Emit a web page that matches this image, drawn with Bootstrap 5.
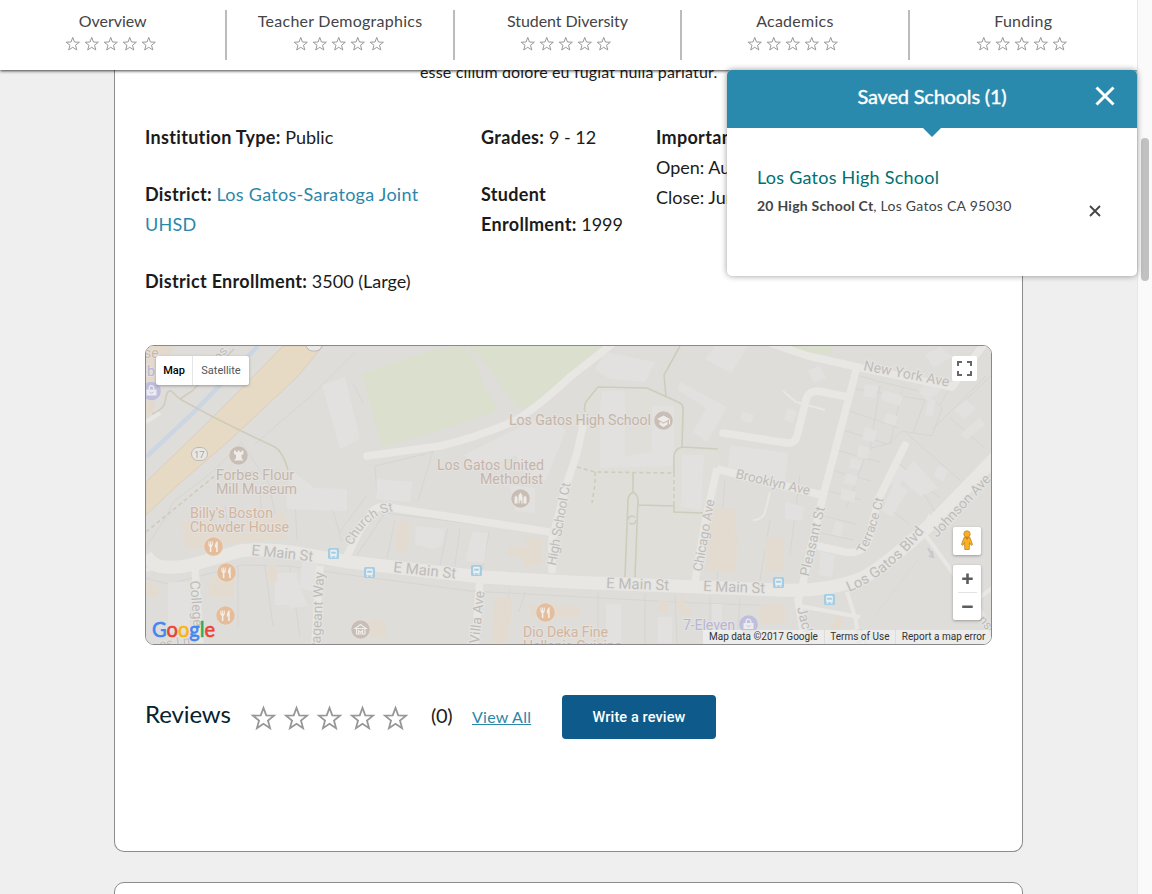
<!DOCTYPE html>
<html lang="en">
<head>
<meta charset="utf-8">
<meta name="viewport" content="width=device-width, initial-scale=1">
<title>Los Gatos High School</title>
<link rel="stylesheet" href="https://cdn.jsdelivr.net/npm/bootstrap@5.3.0/dist/css/bootstrap.min.css">
<style>
  body { font-family: Lato, "Liberation Sans", sans-serif; font-size: 18px; line-height: 30px; color: #1b1b1b; height: 894px; overflow: hidden; background: #efefef; }
  .page-area { width: 1137px; height: 894px; background: #efefef; overflow: hidden; }
  .section-bar { height: 70px; padding-top: 10px; background: #fff; box-shadow: 0 1px 3px rgba(0,0,0,.75); z-index: 2; flex: none; }
  .section-tab { height: 50px; width: 227.4px; flex: none; border-right: 2px solid #bcbcbc; color: #444; font-size: 16px; line-height: 22px; letter-spacing: .25px; }
  .section-tab.tab-tight { letter-spacing: -.05px; }
  .section-tab:last-child { border-right: 0; }
  .section-tab svg { display: block; margin: 4px 0 0 -4px; }
  .star-shape { fill: none; stroke: #969696; }
  .profile-card { width: 909px; margin-left: 114px; border: 1px solid #8c8c8c; background: #fff; }
  .profile-main { height: 782px; border-top: 0; border-radius: 0 0 10px 10px; padding: 0 30px; flex: none; }
  .profile-next { height: 60px; margin-top: 30px; border-radius: 10px 10px 0 0; flex: none; }
  .blurb { font-size: 16px; margin: -13px 0 35px 275px; letter-spacing: .16px; }
  .facts { height: 223px; }
  .facts p { margin-bottom: 27px; }
  .facts b { font-weight: 700; letter-spacing: .32px; }
  .facts .link-teal { letter-spacing: .28px; }
  .fact-a { width: 336px; padding-right: 50px; }
  .fact-b { width: 175px; padding-right: 20px; }
  .link-teal { color: #2b87a9; }
  .map-box { width: 847px; height: 300px; border: 1px solid #8a888a; border-radius: 9px; overflow: hidden; font-family: Roboto, sans-serif; }
  .map-box > svg { display: block; }
  .map-ctl { position: absolute; background: #fff; border-radius: 2px; box-shadow: 0 1px 3px rgba(0,0,0,.3); }
  .map-type { left: 10px; top: 10px; width: 93px; height: 29px; font-size: 11px; line-height: 29px; color: #555; }
  .map-type span:first-child { width: 37px; border-right: 1px solid #e6e6e6; color: #000; font-weight: 500; }
  .map-full { left: 806px; top: 10px; width: 25px; height: 25px; box-shadow: none; }
  .map-peg { left: 807px; top: 181px; width: 28px; height: 28px; }
  .map-zoom { left: 807px; top: 219px; width: 28px; height: 55px; }
  .map-legal { position: absolute; right: 0; bottom: 0; height: 14px; font-size: 10px; line-height: 14px; color: #333; }
  .map-legal span { background: rgba(240,240,239,.75); padding: 0 5.7px; margin-left: 1px; white-space: nowrap; }
  .reviews { margin-top: 50px; height: 44px; }
  .reviews h2 { font-size: 24px; font-weight: 400; color: #06222f; width: 106px; line-height: 38px; margin: 0; letter-spacing: -.1px; }
  .review-count { font-size: 20px; line-height: 41px; width: 41px; margin-left: 21px; letter-spacing: -.3px; }
  .view-all { font-size: 16px; line-height: 43px; letter-spacing: .25px; }
  .btn-review { width: 154px; height: 44px; margin-right: 276px; background: #0d5a8b; color: #fff; font: 500 14.5px Roboto, sans-serif; letter-spacing: .12px; border: 0; border-radius: 4px; }
  .saved { position: absolute; left: 727px; top: 70px; width: 410px; height: 206px; background: #fff; border-radius: 5px; box-shadow: 0 0 6px rgba(0,0,0,.4); z-index: 3; }
  .saved-head { height: 58px; background: #2a8aad; color: #fff; border-radius: 5px 5px 0 0; font-size: 20px; line-height: 52px; letter-spacing: -.2px; -webkit-text-stroke: .4px #fff; }
  .saved-head::after { content: ""; position: absolute; left: 195px; top: 57px; border: 10px solid transparent; border-top-color: #2a8aad; border-bottom: 0; }
  .saved-close { position: absolute; right: 22px; top: 16px; }
  .saved-item { padding: 33px 36px 0 30px; }
  .saved-name { font-size: 18px; line-height: 32px; color: #007070; letter-spacing: .24px; }
  .saved-addr { font-size: 14px; line-height: 25px; color: #444; letter-spacing: .25px; }
  .saved-remove { margin-top: 44px; }
  .scroll-track { width: 15px; height: 894px; background: #fafafa; border-left: 1px solid #e7e7e7; padding: 138px 0 0 3px; }
  .scroll-thumb { width: 8px; height: 143px; border-radius: 4px; background: #c1c1c1; }
</style>
</head>
<body>
<svg width="0" height="0" class="position-absolute">
  <symbol id="star" viewBox="0 0 24 24" overflow="visible"><path class="star-shape" d="M12 1.8l2.65 7.1 7.55.3-5.9 4.75 2 7.3L12 17.1l-6.3 4.15 2-7.3L1.8 9.2l7.55-.3z"/></symbol>
  <symbol id="stars-sm" viewBox="0 0 91 16"><g stroke-width="1.5"><use href="#star" x="0" width="15.500" height="16"/><use href="#star" x="19" width="15.500" height="16"/><use href="#star" x="38" width="15.500" height="16"/><use href="#star" x="57" width="15.500" height="16"/><use href="#star" x="76" width="15.500" height="16"/></g></symbol>
</svg>
<div class="d-flex position-relative">
  <main class="page-area d-flex flex-column">
    <nav class="section-bar d-flex position-relative">
      <div class="section-tab tab-tight d-flex flex-column align-items-center">Overview<svg width="91" height="16"><use href="#stars-sm"/></svg></div>
      <div class="section-tab d-flex flex-column align-items-center">Teacher Demographics<svg width="91" height="16"><use href="#stars-sm"/></svg></div>
      <div class="section-tab tab-tight d-flex flex-column align-items-center">Student Diversity<svg width="91" height="16"><use href="#stars-sm"/></svg></div>
      <div class="section-tab d-flex flex-column align-items-center">Academics<svg width="91" height="16"><use href="#stars-sm"/></svg></div>
      <div class="section-tab d-flex flex-column align-items-center">Funding<svg width="91" height="16"><use href="#stars-sm"/></svg></div>
    </nav>

    <section class="profile-card profile-main">
      <p class="blurb">esse cillum dolore eu fugiat nulla pariatur.</p>
      <div class="facts d-flex">
        <div class="fact-a">
          <p><b>Institution Type:</b> Public</p>
          <p><b>District:</b> <span class="link-teal">Los Gatos-Saratoga Joint UHSD</span></p>
          <p><b>District Enrollment:</b> 3500 (Large)</p>
        </div>
        <div class="fact-b">
          <p><b>Grades:</b> 9 - 12</p>
          <p><b>Student Enrollment:</b> 1999</p>
        </div>
        <div class="text-nowrap"><b>Important Dates:</b><br>Open: August 14<br>Close: June 8</div>
      </div>

      <div class="map-box position-relative">
        <svg width="845" height="298" viewBox="146 346 845 298">
          <defs>
            <g id="food"><circle r="10" fill="#e9dfd5"/><circle r="9.3" fill="#e4bd9c"/><path d="M-4.600-5v3.500M-2.900-5v4M-1.200-5v3.500" stroke="#f4eee7" stroke-width="1"/><path d="M-5-2h4.200q0 2.300-1.300 2.500V5.500h-1.600V.5Q-5 .3-5-2zM4.200 5.500V-5.500Q1.300-4.500 1.300 1h1.300v4.500z" fill="#f4eee7"/></g>
            <g id="bus"><rect x="-5.500" y="-5.500" width="11" height="11" rx="1.500" fill="#a4cde3"/><rect x="-3.300" y="-3.800" width="6.600" height="6.600" rx="1" fill="#eaf0f2"/><path d="M-2.300-1.800h4.600v2h-4.600z" fill="#a4cde3"/><path d="M-3 3h1.800v1.200H-3zM1.200 3H3v1.200H1.200z" fill="#eaf0f2"/></g>
            <g id="bag"><circle r="10" fill="#dcdbe2"/><circle r="9.3" fill="#bfbfdb"/><path d="M-5-1.500H5v6H-5z" fill="#ebebf0"/><path d="M-2.300-1.500v-1.500a2.300 2.300 0 0 1 4.600 0v1.500" fill="none" stroke="#ebebf0" stroke-width="1.300"/><path d="M-2 1q2 2.600 4 0" fill="none" stroke="#bfbfdb"/></g>
            <g id="spot"><circle r="10" fill="#e6e0db"/><circle r="9.3" fill="#c9beb6"/></g>
          </defs>
          <rect x="146" y="346" width="845" height="298" fill="#deddda"/>
          <path d="M584 405l14-18 49 2 36 18v45l35-3 4 19-20 110-152-3 25-120z" fill="#dfded8"/>
          <!-- parks -->
          <path d="M362 373l71-23 30-4 15 19 5 20 14 22-4 6-111 35zM468 346h140l-38 28-40 34h-13l-30-42zM790 346h42v8l-22-1z" fill="#dbdfce"/>
          <!-- parcel boundaries -->
          <g fill="none" stroke="#d4d3d0" stroke-width=".8">
            <path d="M146 547l22-33 5-12 43-33 25-27 28 42 10 50M355 352l-42 42-58 50M353 383l10 20M375 466l50-12 8-3-15 50M375 466l2 30M357 555l28-42 162 20M367 495l-28 38M395 520l-8 38M448 528l-9 42M460 528l-6 44M489 532l-7 40M146 578l22 6 20-5 55-14 45 1 62 9 120 16 75 4 150 8 90 3M510 590l-15 53M525 592l-6 20M598 592v50M645 594v50M675 594l2 50M710 597v45M740 599l-2 30M238 567v60M265 566l8 60M290 567l10 70M225 505l5 38M260 495l4 45M295 500l2 40M330 500l12 42"/>
            <path d="M857 375l20 6 50 12 15 15-10 28-30-5-12 12-22 6-22 60M850 388l75 12M847 410l52 18M843 430l44 14M836 450l44 12M831 470l40 11M825 490l36 10M880 385l-10 65M902 390l-12 55M925 400l-12 33M932 430l55-55M905 432l55 48M820 515l36 9M816 532l38 8M895 460l45 38M880 500l30 25M910 470l27 45M725 480l-8 100M770 520l-10 60M800 475l-10 80M940 405l28-50M950 418l35 30M955 410l40-38"/>
          </g>
          <!-- buildings -->
          <g fill="#e2e1df">
            <path d="M322 385l23-8 15 62-20 10zM286 489l8-17 20 16 33 1v22l-60-2zM377 479l35 3-2 20-34-3zM464 455l60-30 20-10 22 15-20 50-20-5-10-20-35 15zM510 485l25 3v25l-20-2zM416 526l28 3-2 16-8 4-19-4zM472 532l16 1-4 30-18-2zM275 573h22v32h-22zM280 575l14-3 14 34-18 2zM302 558l16 6-4 28-14-4zM168 582h22v50h-22z"/>
            <path d="M602 391h23v65l50-8 1 18-76 2v-60zM652 406h22v50h-22zM595 370l10-18 50 10-10 20-35-3zM680 382l47 25-20 35-14-10 13-24-28-18zM682 455h22l-3 55-20-3zM715 346h33l-17 27-26-14zM731 445l57 8-3 28-58-10zM742 412l12 3-3 8-11-3zM606 604h15v40h-15zM658 617h14v26h-14zM712 604h10v32h-10z"/>
            <path d="M808 370l12-4 6 12-12 5zM787 408l10 3-4 12-9-3zM865 384l13 2-3 12-12-2zM883 390l20 6-3 10-19-6zM929 398l7 2-4 17-7-3zM865 427l12 4-3 11-12-3zM886 413l12 3-3 10-12-4zM858 445l12 3-3 11-10-2zM851 458l11 3-3 9-10-2zM846 473l12 4-3 9-11-3zM842 488l14 4-2 11-14-4zM898 465l9 6-9 17-8-5zM913 460l25 28-17 8-20-17zM938 465l10 5-5 12-9-6zM918 390l13-9 10 9-13 11zM954 410l12-10 10 8-12 11zM960 435l20-18 5 8-18 14zM894 483l14 7-16 27-10-6zM836 520l8 4-3 13-9-3zM785 502l20 5-3 14-17-2zM820 551l15 4-3 22-13-2zM925 355l15-8 13 10-20 10z"/>
          </g>
          <g fill="#e3dbd0">
            <path d="M181 522l35-8v20l30-5v-15h40v25l-45 3-55 8zM209 577h25v20h-25zM268 565h9v16h-9zM397 521h13l-3 32-12-2zM526 537h15l1 28-18 2-1-9-16-3 2-9 16 1zM495 597h16v20l-5 26h-14zM530 605h50v12h-50zM706 508l30 1-2 25 4 3-3 36-28-2zM765 537h20l-2 35-18-3zM659 599l10 2-1 12-10-2zM677 598h8v10h6l-1 8-12-2zM760 605l25-1v20h-25zM146 582l15 5-5 12-10-3zM370 620h16v18h-16zM836 615l8 3-7 16-7-3z"/>
          </g>
          <!-- creek, highway and trails -->
          <path d="M146 346h28l-8 16-20 40zM146 403l6-9 4 12-10 13z" fill="#e3dacd"/>
          <path d="M146 457l47-44 65-67" fill="none" stroke="#cbd6e2" stroke-width="4.500"/>
          <path d="M146 482l61-59 36-36 40-41h40l-26 31-67 63-50 43-34 32z" fill="#e7dac4" stroke="#dccdbb"/>
          <g fill="none" stroke="#cfccbb" stroke-width="1.600">
            <path d="M152 414q12-5 13-12 2-13 6-11l9 8 12-8 42-42M180 399q35 20 95 48 8 5 13 23"/>
            <path d="M146 532l71-58 40-2M577 467l18 5 78 1M595 472v12l-3 19M674 473v34" stroke-dasharray="4 3"/>
            <path d="M585 412q-2-8 4-14l9-11 49 1 31 14q6 2 5 10l-1 35q-8 2-8 10v16M682 447l36 2M666 397l-2-22 16-29M633 472v20q-5 3-5 8l-3 77M633 492q5 3 5 8l-3 77M638 505l36 1v6l29 1"/>
            <circle cx="632" cy="520" r="4" stroke-dasharray="9 4"/>
          </g>
          <!-- streets -->
          <g fill="none" stroke="#e8e7e4" stroke-linejoin="round">
            <path d="M146 555q6 12 20 12 14 1 29-3l45-13q20-3 50 1l60 10 67 8 66 7 87 5 210 8q48 2 82-12 20-9 73-58l60-62" stroke-width="13"/>
            <g stroke-width="7.500">
              <path d="M345 560l14-28 15-22q6-5 13-3l163 25"/>
              <path d="M367 456l73-10q35-8 70-23 20-9 60-46l42-33M905 445l-27 55-9 38q-5 17-24 14l-27-6" stroke-linecap="round"/>
              <path d="M585 417l-8 36-10 30-15 57v33M717 468l-12 55-10 58M717 469l23 6 82 20M857 367l-35 133-20 87-4 13 7 43M770 343l38 13 54 12M862 368l90 19 32-43"/>
              <path d="M723 433l64 10q8 1 10-7l9-36q2-9 12-9l30 6" stroke-linecap="round"/>
              <path d="M195 568l5 75M320 566l-5 78M480 580l-5 65"/>
            </g>
            <g stroke-width="4"><path d="M770 492l-5 20q-2 8-12 8M783 391l13 11 29 8" stroke-width="2"/><path d="M930 515l-6 18 58 80 10 32M980 597l14-10M847 592l8 25 5 28M800 606l60 11M146 570l10-3M146 422l14-9"/></g>
          </g>
          <path d="M928 548l5 9-4-1M933 557l-1-6" stroke="#c9c8cd" stroke-width="2" fill="none"/>
          <path d="M918 560l-45 58" stroke="#d4d3d0" stroke-dasharray="1 2"/>
          <!-- street names -->
          <g font-size="14" fill="#bebcba" stroke="#e6e5e2" stroke-width="2" paint-order="stroke">
            <text transform="translate(251 555) rotate(6)" textLength="62" font-size="15">E Main St</text>
            <text transform="translate(393 572) rotate(6)" textLength="63" font-size="15">E Main St</text>
            <text transform="translate(606 588) rotate(2)" textLength="63" font-size="15">E Main St</text>
            <text transform="translate(703 591) rotate(2)" textLength="62" font-size="15">E Main St</text>
            <path id="church" d="M352 546q14-28 36-34l20-3" fill="none" stroke="none"/>
            <text font-size="13"><textPath href="#church">Church St</textPath></text>
            <text transform="translate(556 566) rotate(-80)" textLength="84" font-size="13.500">High School Ct</text>
            <text transform="translate(479 644) rotate(-84)" textLength="53">Villa Ave</text>
            <text transform="translate(320 652) rotate(-87)" textLength="80">Pageant Way</text>
            <text transform="translate(190 581) rotate(86)" textLength="46">College</text>
            <text transform="translate(160 649) rotate(-8)" font-size="13">es Ln</text>
            <text transform="translate(702 572) rotate(-80)" textLength="73" font-size="13.500">Chicago Ave</text>
            <text transform="translate(735 478) rotate(13)" textLength="76" font-size="13.500">Brooklyn Ave</text>
            <text transform="translate(863 370) rotate(11)" textLength="87">New York Ave</text>
            <path id="terrace" d="M864 554q11-18 21-60" fill="none" stroke="none"/>
            <text font-size="13"><textPath href="#terrace">Terrace Ct</textPath></text>
            <text transform="translate(809 577) rotate(-77)" textLength="71">Pleasant St</text>
            <path id="blvd" d="M849 592q45-18 84-72" fill="none" stroke="none"/>
            <text font-size="14.500"><textPath href="#blvd" textLength="98">Los Gatos Blvd</textPath></text>
            <text transform="translate(937 538) rotate(-47)" textLength="80">Johnson Ave</text>
            <text transform="translate(797 608) rotate(76)" font-size="14">Jackson</text>
            <text transform="translate(853 630) rotate(65)" font-size="13">Alpine</text>
            <text transform="translate(978 620) rotate(50)" font-size="13">nson</text>
            <text transform="translate(219 362) rotate(-50)" font-size="13">os</text>
          </g>
          <!-- places -->
          <g font-size="14.200" fill="#c4b5ab" stroke="#e5e2df" stroke-width="2" paint-order="stroke">
            <text x="509" y="425" textLength="142">Los Gatos High School</text>
            <text x="437" y="470" textLength="107">Los Gatos United</text><text x="480" y="484" textLength="63">Methodist</text>
            <text x="216" y="480" textLength="78">Forbes Flour</text><text x="216" y="494" textLength="81">Mill Museum</text>
            <g fill="#d2b6a0"><text x="190" y="518" textLength="83">Billy's Boston</text><text x="190" y="532" textLength="99">Chowder House</text>
            <text x="523" y="637" textLength="85">Dio Deka Fine</text><text x="523" y="651" textLength="99">Hellenic Cuisine</text><text x="144" y="358">se</text></g>
            <g fill="#b6b6d6"><text x="683" y="630" textLength="52">7-Eleven</text><text x="147" y="376">b</text></g>
          </g>
          <g fill="#e9e8e6" stroke="#bcbab7"><rect x="191.500" y="447.500" width="16" height="13" rx="6.500"/><rect x="306" y="338" width="16" height="13" rx="6.500"/></g>
          <text x="194" y="458" font-size="9.500" fill="#aaa7a4">17</text>
          <use href="#food" x="213.500" y="546.500"/><use href="#food" x="226.500" y="572.500"/><use href="#food" x="225.500" y="615.500"/><use href="#food" x="545.500" y="612.500"/>
          <use href="#bus" x="333.500" y="553.500"/><use href="#bus" x="369.500" y="572.500"/><use href="#bus" x="476.500" y="570.500"/><use href="#bus" x="778.500" y="582.500"/><use href="#bus" x="829.500" y="599.500"/>
          <use href="#bag" x="151.500" y="391"/><use href="#bag" x="748.500" y="624.500"/>
          <g transform="translate(.5 .5)">
            <use href="#spot" x="238" y="455"/><use href="#spot" x="663" y="420"/><use href="#spot" x="520" y="498"/><use href="#spot" x="360" y="629"/>
            <g fill="#eeebe8">
              <path d="M233.500 450v3.500l2 1v3l-2 2.500h9.500l-2-2.500v-3l2-1V450h-2v1.500h-1.800V450h-2v1.500h-1.800V450z"/>
              <path d="M656.500 418.500l6.500-3.500 6.500 3.500-6.500 3.500zM659 421v3l4 2.500 4-2.500v-3l-4 2.200zM668.500 419h1v5h-1z"/>
              <path d="M514 503v-6l1.500-2 1.500 2v6zM518 503v-8l2-3 2 3v8h-1.200v-3h-1.600v3zM523 503v-6l1.500-2 1.500 2v6z"/>
            </g>
            <path d="M354.500 628l5.500-4 5.500 4zM356 628v5.500h8.500V628M358 633v-3l2 2 2-2v3" fill="none" stroke="#eeebe8" stroke-width="1.200"/>
          </g>
          <text x="152" y="636.500" font-family="Lato, sans-serif" font-size="21" font-weight="400" textLength="63" lengthAdjust="spacingAndGlyphs"><tspan fill="#4285f4" stroke="#4285f4" stroke-width=".6">G</tspan><tspan fill="#ea4335" stroke="#ea4335" stroke-width=".6">o</tspan><tspan fill="#fbb605" stroke="#fbb605" stroke-width=".6">o</tspan><tspan fill="#4285f4" stroke="#4285f4" stroke-width=".6">g</tspan><tspan fill="#34a853" stroke="#34a853" stroke-width=".6">l</tspan><tspan fill="#ea4335" stroke="#ea4335" stroke-width=".6">e</tspan></text>
        </svg>
        <div class="map-ctl map-type d-flex text-center"><span>Map</span><span class="flex-fill">Satellite</span></div>
        <div class="map-ctl map-full"><svg class="d-block" width="25" height="25" fill="none" stroke="#666" stroke-width="2"><path d="M6 10V6h4M15 6h4v4M19 15v4h-4M10 19H6v-4"/></svg></div>
        <div class="map-ctl map-peg"><svg class="d-block" width="28" height="28"><path d="M11 10.500h6l2.500 7-1.300.8-1.700-2.800-.3 7h-4.400l-.3-7-1.700 2.800-1.300-.8z" fill="#fbb11f" stroke="#b8852f" stroke-width=".8"/><circle cx="14" cy="7" r="3.200" fill="#fbb11f" stroke="#b8852f" stroke-width=".8"/><path d="M12 10.500h4l-2 2.500z" fill="#e0752d"/></svg></div>
        <div class="map-ctl map-zoom"><svg class="d-block" width="28" height="55"><path d="M14.500 8.500v10.500M9.200 13.700h10.500M9.200 41.700h10.500" stroke="#5c5c5c" stroke-width="2.600"/><path d="M5 27.500h19" stroke="#e3e3e3"/></svg></div>
        <div class="map-legal d-flex"><span>Map data ©2017 Google</span><span>Terms of Use</span><span>Report a map error</span></div>
      </div>

      <div class="reviews d-flex">
        <h2>Reviews</h2>
        <svg width="159" height="44" class="flex-shrink-0"><g stroke-width="1.700"><use href="#star" x="0" y="11" width="25" height="25"/><use href="#star" x="33" y="11" width="25" height="25"/><use href="#star" x="66" y="11" width="25" height="25"/><use href="#star" x="99" y="11" width="25" height="25"/><use href="#star" x="132" y="11" width="25" height="25"/></g></svg>
        <span class="review-count">(0)</span>
        <a href="#" class="view-all link-teal">View All</a>
        <button class="btn btn-review ms-auto" type="button">Write a review</button>
      </div>
    </section>
    <section class="profile-card profile-next"></section>
  </main>

  <aside class="saved">
    <div class="saved-head text-center">Saved Schools (1)
      <svg class="saved-close" width="20" height="20" stroke="#fff" stroke-width="3"><path d="M1.500 1.500l17 17M18.500 1.500l-17 17"/></svg>
    </div>
    <div class="saved-item d-flex justify-content-between">
      <div><div class="saved-name">Los Gatos High School</div><div class="saved-addr"><b>20 High School Ct</b>, Los Gatos CA 95030</div></div>
      <svg class="saved-remove" width="12" height="12" stroke="#444" stroke-width="1.800"><path d="M1 1l10 10M11 1L1 11"/></svg>
    </div>
  </aside>
  <div class="scroll-track"><div class="scroll-thumb"></div></div>
</div>
<script src="https://cdn.jsdelivr.net/npm/bootstrap@5.3.0/dist/js/bootstrap.bundle.min.js"></script>
</body>
</html>
